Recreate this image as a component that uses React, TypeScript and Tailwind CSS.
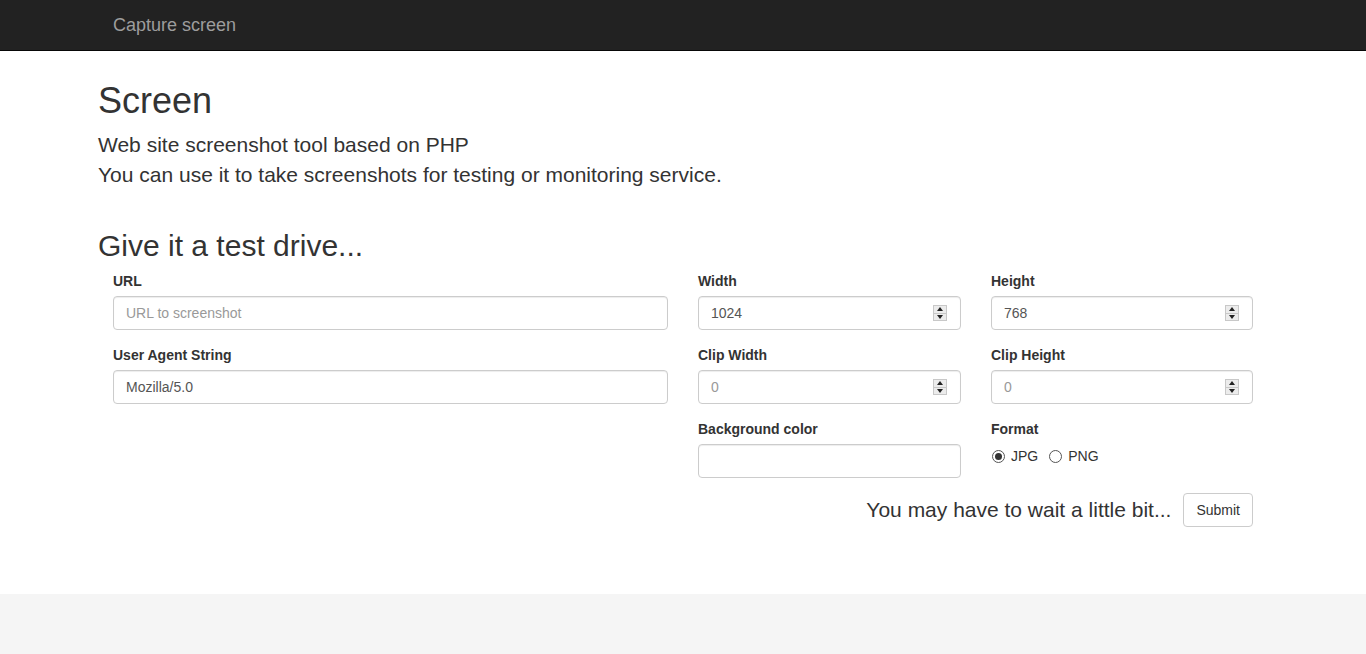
import React from 'react';

const font = { fontFamily: '"Liberation Sans", Arial, Helvetica, sans-serif' };

const Label = ({ children }: { children: React.ReactNode }) => (
  <label className="block text-[14px] leading-[20px] font-bold text-[#333] mb-[5px]">{children}</label>
);

const Spinner = () => (
  <div className="absolute right-[14px] top-[9px] w-[14px] h-[16px] border border-[#c8c8c8] bg-[#ececec] flex flex-col">
    <div className="flex-1 flex items-center justify-center border-b border-[#c8c8c8]">
      <svg width="6" height="4" viewBox="0 0 6 4"><path d="M0 4 L3 0 L6 4 Z" fill="#222" /></svg>
    </div>
    <div className="flex-1 flex items-center justify-center">
      <svg width="6" height="4" viewBox="0 0 6 4"><path d="M0 0 L3 4 L6 0 Z" fill="#222" /></svg>
    </div>
  </div>
);

const inputCls =
  'block w-full h-[34px] px-[12px] border border-[#ccc] rounded-[4px] text-[14px] text-[#555] bg-white shadow-[inset_0_1px_1px_rgba(0,0,0,0.075)] outline-none placeholder:text-[#999]';

const NumberField = ({ label, value, placeholder }: { label: string; value?: string; placeholder?: string }) => (
  <div className="mb-[15px]">
    <Label>{label}</Label>
    <div className="relative">
      <input type="text" defaultValue={value} placeholder={placeholder} className={inputCls} style={font} />
      <Spinner />
    </div>
  </div>
);

const Radio = ({ checked, label }: { checked?: boolean; label: string }) => (
  <div className="flex items-center mr-[10px]">
    <span className="w-[13px] h-[13px] rounded-full border border-[#555] bg-white flex items-center justify-center ml-[1px]">
      {checked && <span className="w-[7px] h-[7px] rounded-full bg-[#333]" />}
    </span>
    <span className="ml-[6px] text-[14px] text-[#333]">{label}</span>
  </div>
);

export default function App() {
  return (
    <div className="min-h-screen flex flex-col bg-white text-[#333]" style={font}>
      <nav className="h-[51px] bg-[#222] border-b border-[#080808]">
        <div className="w-[1170px] mx-auto px-[15px] h-[50px] flex items-center">
          <span className="text-[18px] leading-[20px] text-[#9d9d9d]">Capture screen</span>
        </div>
      </nav>

      <main className="flex-1">
        <div className="w-[1170px] mx-auto">
          <h1 className="mt-[30px] text-[36px] leading-[40px] font-normal">Screen</h1>
          <p className="mt-[9px] text-[21px] leading-[30px]">
            Web site screenshot tool based on PHP
            <br />
            You can use it to take screenshots for testing or monitoring service.
          </p>
          <h2 className="mt-[39px] text-[30px] leading-[33px] font-normal">Give it a test drive...</h2>

          <form className="mt-[9px] ml-[15px] w-[1140px]" onSubmit={(e) => e.preventDefault()}>
            <div className="grid grid-cols-[555px_263px_262px] gap-x-[30px]">
              <div className="mb-[15px]">
                <Label>URL</Label>
                <input type="text" placeholder="URL to screenshot" className={inputCls} style={font} />
              </div>
              <NumberField label="Width" value="1024" />
              <NumberField label="Height" value="768" />

              <div className="mb-[15px]">
                <Label>User Agent String</Label>
                <input type="text" defaultValue="Mozilla/5.0" className={inputCls} style={font} />
              </div>
              <NumberField label="Clip Width" placeholder="0" />
              <NumberField label="Clip Height" placeholder="0" />

              <div />
              <div className="mb-[15px]">
                <Label>Background color</Label>
                <input type="text" className={inputCls} style={font} />
              </div>
              <div className="mb-[15px]">
                <Label>Format</Label>
                <div className="flex items-center h-[24px]">
                  <Radio checked label="JPG" />
                  <Radio label="PNG" />
                </div>
              </div>
            </div>

            <div className="flex items-center justify-end">
              <span className="text-[21px] leading-[28px] mr-[12px]">You may have to wait a little bit...</span>
              <button
                type="submit"
                className="h-[34px] px-[12px] border border-[#ccc] rounded-[4px] bg-white text-[14px] text-[#333]"
                style={font}
              >
                Submit
              </button>
            </div>
          </form>
        </div>
      </main>

      <footer className="h-[60px] bg-[#f5f5f5]" />
    </div>
  );
}
